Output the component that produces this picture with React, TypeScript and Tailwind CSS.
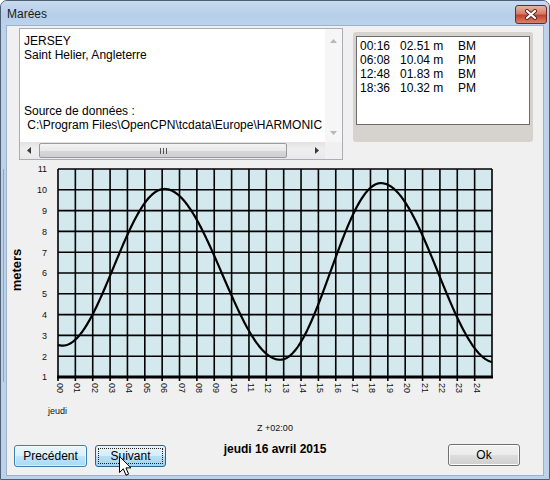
import React from "react";

const X0 = 51;
const HW = 434 / 25;
const xOf = (h: number) => X0 + h * HW;
const yOf = (v: number) => 217 - (v - 1) * 20.8;

const EXT: [number, number][] = [
  [-6.0, 9.9],
  [0.267, 2.51],
  [6.133, 10.04],
  [12.8, 1.83],
  [18.6, 10.32],
  [25.2, 1.7],
];

function tide(t: number): number {
  for (let i = 0; i < EXT.length - 1; i++) {
    const [t1, h1] = EXT[i];
    const [t2, h2] = EXT[i + 1];
    if (t >= t1 && t <= t2) {
      const f = (t - t1) / (t2 - t1);
      return (h1 + h2) / 2 + ((h1 - h2) / 2) * Math.cos(Math.PI * f);
    }
  }
  return 2;
}

function curvePoints(): string {
  const pts: string[] = [];
  for (let t = 0; t <= 25.0001; t += 0.05) {
    pts.push(`${xOf(t).toFixed(2)},${yOf(tide(t)).toFixed(2)}`);
  }
  return pts.join(" ");
}

const TIDES = [
  ["00:16", "02.51 m", "BM"],
  ["06:08", "10.04 m", "PM"],
  ["12:48", "01.83 m", "BM"],
  ["18:36", "10.32 m", "PM"],
];

function Tri({ dir, color }: { dir: "up" | "down" | "left" | "right"; color: string }) {
  const pts =
    dir === "up"
      ? "0,4 3.5,0 7,4"
      : dir === "down"
      ? "0,0 7,0 3.5,4"
      : dir === "left"
      ? "4,0 4,7 0,3.5"
      : "0,0 0,7 4,3.5";
  const w = dir === "up" || dir === "down" ? 7 : 4;
  const h = dir === "up" || dir === "down" ? 4 : 7;
  return (
    <svg width={w} height={h} viewBox={`0 0 ${w} ${h}`}>
      <polygon points={pts} fill={color} />
    </svg>
  );
}

function Chart() {
  const hours = Array.from({ length: 26 }, (_, i) => i);
  const vals = Array.from({ length: 11 }, (_, i) => i + 1);
  return (
    <svg width={536} height={260} viewBox="0 0 536 260" className="block shrink-0">
      <rect x={X0} y={9} width={434} height={208} fill="#d4e9ed" />
      {hours.map((h) => (
        <line
          key={"v" + h}
          x1={xOf(h)}
          x2={xOf(h)}
          y1={9}
          y2={h < 25 ? 221 : 217}
          stroke="#000"
          strokeWidth={1.6}
        />
      ))}
      {vals.map((v) => (
        <line key={"h" + v} x1={X0} x2={X0 + 434} y1={yOf(v)} y2={yOf(v)} stroke="#000" strokeWidth={1.6} />
      ))}
      <line x1={X0 - 1} x2={X0 + 435} y1={217} y2={217} stroke="#000" strokeWidth={3} />
      <polyline points={curvePoints()} fill="none" stroke="#000" strokeWidth={2.2} strokeLinejoin="round" />
      {vals.map((v) => (
        <text key={"yl" + v} x={40} y={yOf(v) + 3.3} textAnchor="end" className="text-[9px]" fill="#111">
          {v}
        </text>
      ))}
      {hours.slice(0, 25).map((h) => (
        <text
          key={"xl" + h}
          transform={`translate(${(xOf(h) - 1).toFixed(2)},223) rotate(90)`}
          className="text-[9px]"
          fill="#111"
        >
          {String(h).padStart(2, "0")}
        </text>
      ))}
      <text transform="translate(14,110) rotate(-90)" textAnchor="middle" className="text-[13px] font-bold" fill="#000">
        meters
      </text>
      <text x={41} y={254} className="text-[9px]" fill="#111">
        jeudi
      </text>
    </svg>
  );
}

export default function App() {
  return (
    <div className="relative w-[550px] h-[480px] overflow-hidden rounded-t-[7px] border border-[#4f6075] bg-[#bcd2ea] font-['Liberation_Sans',Arial,sans-serif] text-black flex flex-col">
      {/* Title bar */}
      <div className="h-[24px] shrink-0 flex items-center justify-between pl-[6px] pr-[2px] bg-[linear-gradient(to_bottom,#c7dbf0,#b6cee8_60%,#bcd3ec)]">
        <span className="text-[12px] leading-[14px] text-[#1b1b1b] mt-[1px]">Marées</span>
        <div className="w-[32px] h-[19px] mt-[2px] rounded-[3px] border border-[#6b2b22] bg-[linear-gradient(to_bottom,#e8b2a4,#d47d68_45%,#c2422f_55%,#d9836b)] flex items-center justify-center">
          <svg width="14" height="11" viewBox="0 0 14 11">
            <path d="M3 2 L11 9 M11 2 L3 9" stroke="#5a2520" strokeWidth="4" strokeLinecap="round" />
            <path d="M3 2 L11 9 M11 2 L3 9" stroke="#ffffff" strokeWidth="2.2" strokeLinecap="round" />
          </svg>
        </div>
      </div>

      {/* Frame + body */}
      <div className="flex-1 flex px-[5px] pb-[3px]">
        <div className="flex-1 flex flex-col bg-[#f0f0f0] border border-[#9db2c9]">
          {/* Top row */}
          <div className="flex items-start pl-[12px] pt-[2px] h-[134px] shrink-0">
            <div className="w-[324px] h-[132px] border border-[#abadb3] bg-white grid grid-cols-[1fr_17px] grid-rows-[1fr_17px]">
              <div className="overflow-hidden pl-[4px] pt-[5px] whitespace-pre text-[12px] leading-[14px] text-black">
                {"JERSEY\nSaint Helier, Angleterre\n\n\n\nSource de données :\n C:\\Program Files\\OpenCPN\\tcdata\\Europe\\HARMONIC"}
              </div>
              <div className="bg-[#f6f6f6] flex flex-col justify-between items-center pt-[10px] pb-[7px]">
                <Tri dir="up" color="#b8b8b8" />
                <Tri dir="down" color="#b8b8b8" />
              </div>
              <div className="flex items-center bg-[linear-gradient(to_bottom,#e2e2e2,#eeeeee_40%,#e9e9e9)]">
                <div className="w-[17px] h-full flex items-center justify-center">
                  <Tri dir="left" color="#3a3a3a" />
                </div>
                <div className="ml-[2px] w-[248px] h-[15px] rounded-[2px] border border-[#9a9a9a] bg-[linear-gradient(to_bottom,#f4f4f4,#e8e8e8_50%,#d7d7d7_51%,#d0d0d0)] flex items-center justify-center gap-[2px]">
                  <span className="w-[1px] h-[6px] bg-[#555]" />
                  <span className="w-[1px] h-[6px] bg-[#555]" />
                  <span className="w-[1px] h-[6px] bg-[#555]" />
                </div>
                <div className="flex-1" />
                <div className="w-[17px] h-full flex items-center justify-center">
                  <Tri dir="right" color="#3a3a3a" />
                </div>
              </div>
              <div className="bg-[#f0f0f0]" />
            </div>

            <div className="ml-[10px] mt-[4px] w-[180px] h-[110px] rounded-[3px] bg-[#d6d3ce] pt-[4px] px-[3px] pb-[17px]">
              <div className="h-full bg-white border border-[#6c6c6c] pl-[3px] pt-[2px] text-[12px] leading-[14px] text-black">
                {TIDES.map(([t, h, k]) => (
                  <div key={t} className="flex whitespace-pre">
                    <span className="w-[40px]">{t}</span>
                    <span className="w-[58px]">{h}</span>
                    <span>{k}</span>
                  </div>
                ))}
              </div>
            </div>
          </div>

          {/* Chart */}
          <Chart />

          {/* Bottom area */}
          <div className="flex-1 flex flex-col">
            <div className="pt-[2px] text-center text-[9px] leading-[12px] text-[#111]">Z +02:00</div>
            <div className="mt-[11px] grid grid-cols-[1fr_auto_1fr] items-start">
              <div className="flex pl-[7px] gap-[8px]">
                <button className="w-[73px] h-[22px] rounded-[3px] border border-[#3c7fb1] bg-[linear-gradient(to_bottom,#eaf6fd,#d9f0fc_50%,#bee6fd_51%,#a7d9f5)] text-[12px] leading-[14px] text-black shadow-[inset_0_0_0_1px_#ffffff99]">
                  Precédent
                </button>
                <button className="relative w-[71px] h-[22px] rounded-[3px] border border-[#2c628b] bg-[linear-gradient(to_bottom,#e5f4fc,#d4edfb_50%,#b6dff6_51%,#a2d4f0)] text-[12px] leading-[14px] text-black">
                  <span className="absolute inset-[2px] border border-dotted border-[#222]" />
                  Suivant
                </button>
              </div>
              <div className="-mt-[3px] text-[12px] leading-[14px] font-bold text-black">jeudi 16 avril 2015</div>
              <div className="flex justify-end pr-[23px]">
                <button className="w-[72px] h-[22px] -mt-[1px] rounded-[3px] border border-[#707070] bg-[linear-gradient(to_bottom,#f2f2f2,#ebebeb_50%,#dddddd_51%,#cfcfcf)] text-[12px] leading-[14px] text-black shadow-[inset_0_0_0_1px_#fcfcfc]">
                  Ok
                </button>
              </div>
            </div>
          </div>
        </div>
      </div>

      {/* Pink frame artifact */}
      <div className="absolute left-[2px] top-[168px] w-[1px] h-[213px] bg-[#d9869a]" />

      {/* Mouse cursor */}
      <svg className="absolute left-[118px] top-[455px]" width="13" height="21" viewBox="0 0 13 21">
        <path d="M0.5 0.5 L0.5 16.5 L4.3 12.8 L7 19.2 L9.6 18.1 L7 11.9 L12 11.9 Z" fill="#fff" stroke="#000" strokeWidth="1" strokeLinejoin="round" />
      </svg>
    </div>
  );
}
